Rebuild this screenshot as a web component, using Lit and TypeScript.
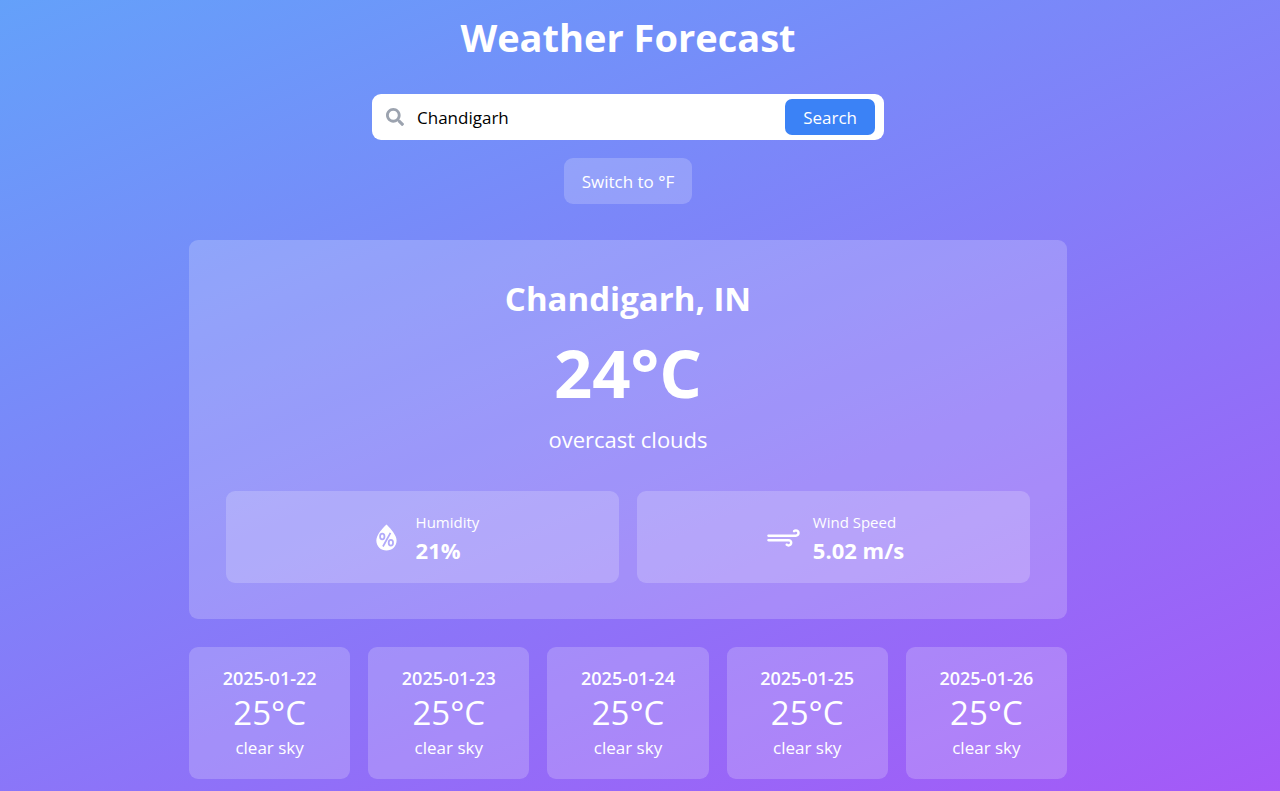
import { LitElement, html, css, svg } from "lit";
import { customElement, property, state } from "lit/decorators.js";

interface Day {
  date: string;
  celsius: number;
  sky: string;
}

const toUnit = (celsius: number, unit: string) =>
  `${unit === "C" ? celsius : Math.round((celsius * 9) / 5 + 32)}°${unit}`;

const humidityIcon = svg`
  <mask id="percent">
    <rect width="30" height="30" fill="#fff"></rect>
    <g fill="none" stroke="#000" stroke-width="1.3">
      <ellipse cx="11.9" cy="14.2" rx="1.6" ry="2.1"></ellipse>
      <ellipse cx="18.2" cy="18.9" rx="1.6" ry="2.1"></ellipse>
      <path d="M12.4 21.6L17.9 11.6"></path>
    </g>
  </mask>
  <path mask="url(#percent)" d="M7.56 17.19c0-.88.24-1.89.72-3.03s1.1-2.25 1.86-3.31c1.56-2.06 2.92-3.62 4.06-4.67l.75-.72c.25.26.53.5.83.72.41.42 1.04 1.11 1.88 2.09s1.57 1.85 2.17 2.65c.71 1.01 1.32 2.1 1.81 3.25s.74 2.16.74 3.03c0 1-.19 1.95-.58 2.86-.39.91-.91 1.7-1.57 2.36-.66.66-1.45 1.19-2.37 1.58-.92.39-1.89.59-2.91.59-1 0-1.95-.19-2.86-.57-.91-.38-1.7-.89-2.36-1.55-.66-.65-1.19-1.44-1.58-2.35S7.56 18.22 7.56 17.19z"></path>`;

const windIcon = svg`
  <path d="M3.1 16.97c0 .24.09.45.28.62.16.19.37.28.63.28H18.7c.29 0 .53.1.73.3.2.2.3.45.3.74s-.1.53-.3.72c-.2.19-.44.29-.74.29-.29 0-.54-.1-.73-.29-.16-.18-.36-.26-.6-.26-.25 0-.46.09-.64.26s-.27.38-.27.61c0 .25.09.46.28.63.56.55 1.22.83 1.96.83.78 0 1.45-.27 2.01-.81.56-.54.83-1.19.83-1.97s-.28-1.44-.84-2c-.56-.56-1.23-.84-2-.84H4.01c-.25 0-.46.09-.64.26-.18.17-.27.38-.27.63z"></path>
  <path d="M3.1 13.69c0 .23.09.43.28.61.17.18.38.26.63.26h20.04c.78 0 1.45-.27 2.01-.82.56-.54.84-1.2.84-1.97 0-.77-.28-1.44-.84-1.99s-1.23-.83-2.01-.83c-.77 0-1.42.27-1.95.8-.18.16-.27.38-.27.67 0 .26.09.47.26.63.17.16.38.24.63.24.24 0 .45-.08.63-.24.19-.21.42-.31.7-.31.29 0 .53.1.73.3.2.2.3.44.3.73s-.1.53-.3.72c-.2.19-.44.29-.73.29H4.01c-.25 0-.46.09-.64.26-.18.17-.27.38-.27.63z"></path>`;

@customElement("weather-day")
class WeatherDay extends LitElement {
  @property({ attribute: false }) day!: Day;
  @property() unit = "C";

  static styles = css`
    :host {
      display: block;
      padding: 18px;
      border-radius: 9px;
      background: rgb(255 255 255 / 0.2);
      text-align: center;
    }
    .date,
    .temp,
    .sky {
      margin: 0;
      font-size: 17px;
      line-height: 27px;
    }
    .date {
      font-size: 18px;
      font-weight: 600;
    }
    .temp {
      font-size: 33px;
      line-height: 42px;
    }
  `;

  render() {
    return html`
      <h3 class="date">${this.day.date}</h3>
      <p class="temp">${toUnit(this.day.celsius, this.unit)}</p>
      <p class="sky">${this.day.sky}</p>
    `;
  }
}

@customElement("app-root")
class AppRoot extends LitElement {
  @state() private unit = "C";

  private days: Day[] = [22, 23, 24, 25, 26].map((d) => ({
    date: `2025-01-${d}`,
    celsius: 25,
    sky: "clear sky",
  }));

  static styles = css`
    :host {
      display: block;
      min-height: 100vh;
      box-sizing: border-box;
      padding: 14px 24px 12px 0;
      background: linear-gradient(157deg, #60a5fa -6%, #a855f7 105%);
      color: #fff;
      font-family: "Open Sans", "Noto Sans", sans-serif;
      font-size: 17px;
      line-height: 27px;
    }
    * {
      box-sizing: border-box;
    }
    h1,
    h2,
    p {
      margin: 0;
    }
    button,
    input {
      font: inherit;
      border: 0;
    }
    button {
      color: #fff;
      cursor: pointer;
    }
    .page {
      max-width: 878px;
      margin: 0 auto;
    }
    .title {
      margin-bottom: 34px;
      font-size: 38px;
      line-height: 46px;
      font-weight: 700;
      text-align: center;
    }
    .search {
      display: flex;
      align-items: center;
      max-width: 512px;
      height: 46px;
      margin: 0 auto 18px;
      padding: 0 9px 0 14px;
      border-radius: 9px;
      background: #fff;
    }
    .glass {
      flex: none;
      width: 18px;
      height: 18px;
      fill: #9ca3af;
    }
    .field {
      flex: 1;
      min-width: 0;
      padding: 0 13px;
      background: none;
      color: #000;
      outline: none;
    }
    .go {
      height: 36px;
      padding: 0 18px;
      border-radius: 7px;
      background: #3b82f6;
    }
    .switch {
      display: block;
      height: 46px;
      margin: 0 auto 36px;
      padding: 0 18px;
      border-radius: 9px;
      background: rgb(255 255 255 / 0.2);
    }
    .current {
      margin-bottom: 28px;
      padding: 36px 37px;
      border-radius: 9px;
      background: rgb(255 255 255 / 0.2);
      text-align: center;
    }
    .city {
      margin-bottom: 16px;
      font-size: 33px;
      line-height: 46px;
      font-weight: 700;
    }
    .temp {
      margin-bottom: 16px;
      font-size: 67px;
      line-height: 69px;
      font-weight: 700;
    }
    .sky {
      margin-bottom: 36px;
      font-size: 22px;
      line-height: 32px;
    }
    .stats {
      display: grid;
      grid-template-columns: 1fr 1fr;
      gap: 18px;
    }
    .stat {
      display: flex;
      align-items: center;
      justify-content: center;
      gap: 9px;
      padding: 18px;
      border-radius: 9px;
      background: rgb(255 255 255 / 0.2);
      text-align: left;
    }
    .icon {
      width: 41px;
      height: 41px;
      fill: #fff;
    }
    .label {
      font-size: 15px;
      line-height: 26px;
    }
    .value {
      font-size: 22px;
      line-height: 30px;
      font-weight: 700;
    }
    .days {
      display: grid;
      grid-template-columns: repeat(5, 1fr);
      gap: 18px;
    }
  `;

  private toggleUnit() {
    this.unit = this.unit === "C" ? "F" : "C";
  }

  private stat(icon: unknown, label: string, value: string) {
    return html`
      <div class="stat">
        <svg class="icon" viewBox="0 0 30 30" aria-hidden="true">${icon}</svg>
        <div>
          <p class="label">${label}</p>
          <p class="value">${value}</p>
        </div>
      </div>
    `;
  }

  render() {
    return html`
      <main class="page">
        <h1 class="title">Weather Forecast</h1>
        <form class="search" @submit=${(e: Event) => e.preventDefault()}>
          <svg class="glass" viewBox="0 0 512 512" aria-hidden="true">
            <path d="M505 442.7L405.3 343c-4.5-4.5-10.6-7-17-7H372c27.6-35.3 44-79.7 44-128C416 93.1 322.9 0 208 0S0 93.1 0 208s93.1 208 208 208c48.3 0 92.7-16.4 128-44v16.3c0 6.4 2.5 12.5 7 17l99.7 99.7c9.4 9.4 24.6 9.4 33.9 0l28.3-28.3c9.4-9.4 9.4-24.6.1-34zM208 336c-70.7 0-128-57.2-128-128 0-70.7 57.2-128 128-128 70.7 0 128 57.2 128 128 0 70.7-57.2 128-128 128z"></path>
          </svg>
          <input class="field" type="text" aria-label="City" .value=${"Chandigarh"} />
          <button class="go" type="submit">Search</button>
        </form>
        <button class="switch" type="button" @click=${this.toggleUnit}>
          Switch to °${this.unit === "C" ? "F" : "C"}
        </button>
        <section class="current">
          <h2 class="city">Chandigarh, IN</h2>
          <p class="temp">${toUnit(24, this.unit)}</p>
          <p class="sky">overcast clouds</p>
          <div class="stats">
            ${this.stat(humidityIcon, "Humidity", "21%")}
            ${this.stat(windIcon, "Wind Speed", "5.02 m/s")}
          </div>
        </section>
        <section class="days">
          ${this.days.map((day) => html`<weather-day .day=${day} .unit=${this.unit}></weather-day>`)}
        </section>
      </main>
    `;
  }
}
